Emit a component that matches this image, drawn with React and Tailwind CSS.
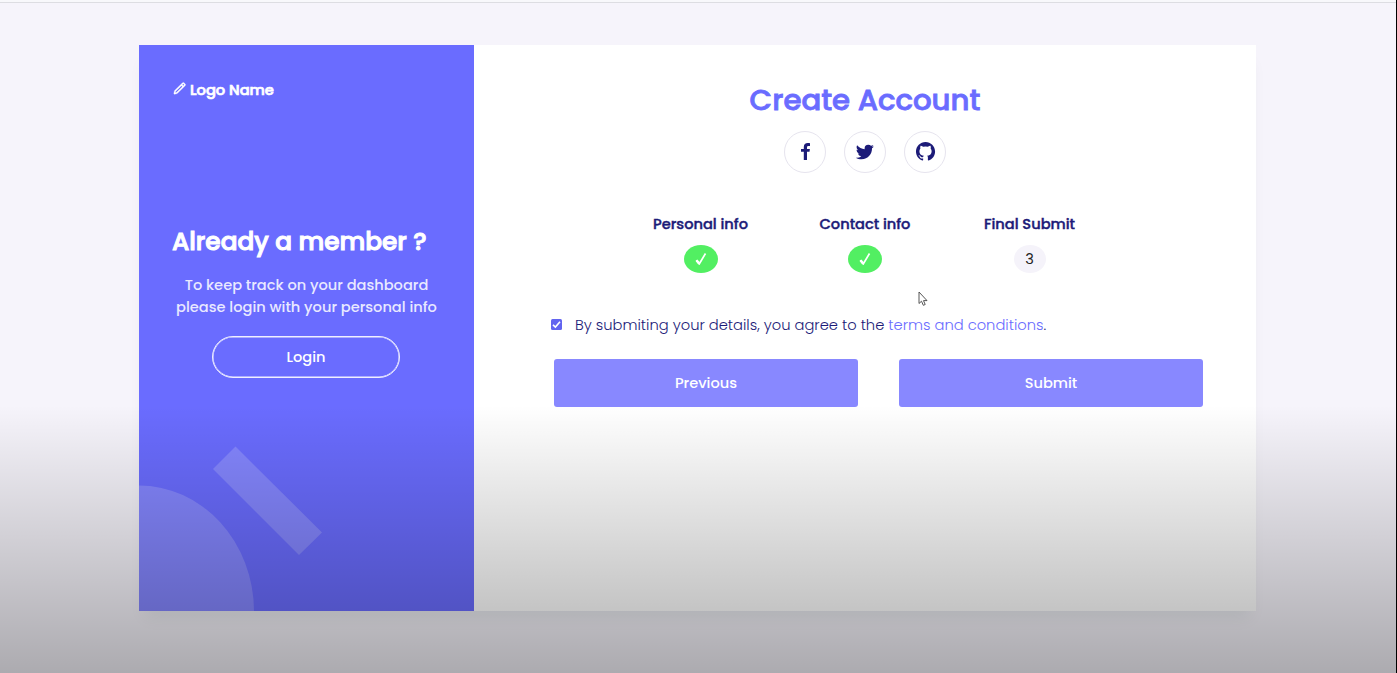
import { BiPencil, BiLogoTwitter, BiLogoGithub } from "react-icons/bi";

function FacebookIcon() {
  return (
    <svg className="mb-px" width="9" height="17" viewBox="0 0 9 17" fill="currentColor">
      <path d="M9 .2V3H7.500C6.300 3 6 3.500 6 4.500V6H8.900L8.500 8.800H6V17H2.800V8.800H0V6H2.800V4C2.800 1.400 4.300 0 6.800 0C7.800 0 8.600.1 9 .2Z" />
    </svg>
  );
}

const socials = [
  { name: "Facebook", icon: <FacebookIcon /> },
  { name: "Twitter", icon: <BiLogoTwitter className="size-[22px]" /> },
  { name: "GitHub", icon: <BiLogoGithub className="mb-px size-[23px]" /> },
];

const steps = [
  { label: "Personal info", done: true },
  { label: "Contact info", done: true },
  { label: "Final Submit", done: false },
];

function LoginPanel() {
  return (
    <aside className="relative flex w-[335px] shrink-0 flex-col overflow-hidden bg-[#6a6cff] text-white">
      <div className="mt-[33px] ml-[33px] flex h-6 items-center whitespace-nowrap">
        <BiPencil className="mb-1 size-[15px] [stroke-width:0.6px]" />
        <span className="ml-[3px] pb-px text-[14.7px] leading-[22px] font-medium [-webkit-text-stroke:0.7px_#fff]">
          Logo Name
        </span>
      </div>
      <h2 className="mt-[120px] ml-[33px] h-10 text-[24.8px] leading-10 font-medium whitespace-nowrap [-webkit-text-stroke:1px_#fff]">
        Already a member ?
      </h2>
      <p className="mt-3 text-center text-[14.6px] leading-[22px] font-medium whitespace-nowrap text-[#e9e9ff]">
        To keep track on your dashboard
        <br />
        please login with your personal info
      </p>
      <button className="mt-[18px] ml-[73px] h-[42px] w-[188px] rounded-full border-[1.5px] border-[#f0efff] pt-[2px] text-[14.6px] font-medium shadow-[inset_0_0_0_0.5px_#f0efff]">
        Login
      </button>
      <svg className="absolute bottom-0 left-0" width="200" height="176" viewBox="0 0 200 176">
        <path d="M0 50.500A115 126 0 0 1 115 176H0Z" fill="#fff" fillOpacity=".18" />
        <path d="M96.500 11.500L183 97.500L160 120L74 34Z" fill="#fff" fillOpacity=".18" />
      </svg>
    </aside>
  );
}

function Step({ label, done }) {
  return (
    <div className="flex w-[164.500px] flex-col items-center">
      <span className="h-6 text-[14.6px] leading-6 font-medium whitespace-nowrap [-webkit-text-stroke:0.4px_#1c1b78]">
        {label}
      </span>
      {done ? (
        <span className="mt-[9px] flex h-7 w-[34px] items-center justify-center rounded-[50%] bg-[#52ef62]">
          <svg width="12" height="14" viewBox="0 0 12 14" fill="none" stroke="#fff">
            <path d="M1.300 8.300L4.200 12L10.500 1.500" strokeWidth="1.700" strokeLinejoin="round" />
            <path d="M1.500 8.300L4.200 11.500" strokeWidth="2.500" />
          </svg>
        </span>
      ) : (
        <span className="mt-[9px] flex h-7 w-8 items-center justify-center rounded-[50%] bg-[#f5f3fa] pt-[2px] text-[14.6px] text-[#222]">
          3
        </span>
      )}
    </div>
  );
}

function AccountForm() {
  return (
    <main className="flex flex-1 flex-col items-center bg-white text-[#1c1b78]">
      <h1 className="mt-[35px] h-10 text-[29.2px] leading-10 font-medium whitespace-nowrap text-[#6a6cff] [-webkit-text-stroke:0.8px_#6a6cff]">
        Create Account
      </h1>
      <div className="mt-[11px] flex gap-[18px]">
        {socials.map(({ name, icon }) => (
          <a
            key={name}
            aria-label={name}
            className="flex size-[42px] items-center justify-center rounded-full border border-[#e6e4ee]"
          >
            {icon}
          </a>
        ))}
      </div>
      <div className="mt-[39px] flex">
        {steps.map((step) => (
          <Step key={step.label} {...step} />
        ))}
      </div>
      <div className="mt-10 ml-[77px] flex h-6 items-center self-start">
        <span className="mb-[2px] flex size-[11px] items-center justify-center rounded-[1.500px] bg-[#6264f0]">
          <svg width="9" height="9" viewBox="0 0 9 9" fill="none" stroke="#fff" strokeWidth="1.600">
            <path d="M1 4.800L3.400 7L8 1.800" />
          </svg>
        </span>
        <span className="ml-[13px] text-[14.7px] leading-6 font-light whitespace-nowrap">
          By submiting your details, you agree to the <a className="text-[#6a6cff]">terms and conditions</a>.
        </span>
      </div>
      <div className="mt-[22px] ml-[27px] flex gap-[41px] text-[14.6px] font-medium text-white">
        <button className="h-12 w-[304px] rounded-[3px] bg-[#8888ff] pt-[2px]">Previous</button>
        <button className="h-12 w-[304px] rounded-[3px] bg-[#8888ff] pt-[2px]">Submit</button>
      </div>
    </main>
  );
}

export default function App() {
  return (
    <div className="relative h-[673px] w-[1397px] overflow-hidden border-r border-black bg-[#f6f4fb] font-['Poppins','Inter',sans-serif]">
      <div className="h-[3px] border-b border-[#dddde2] bg-[#f8f8fb]" />
      <div className="mt-[42px] ml-[139px] flex h-[566px] w-[1117px] shadow-[0_12px_16px_-6px_rgba(0,70,40,0.07)]">
        <LoginPanel />
        <AccountForm />
      </div>
      <svg
        className="pointer-events-none absolute top-[291px] left-[918px]"
        width="10"
        height="16"
        viewBox="0 0 10 16"
        fill="#fff"
        stroke="#444"
        strokeWidth=".9"
      >
        <path d="M1 1V12.500L3.500 10.200L5.300 14.300L7.200 13.500L5.500 9.600H9Z" />
      </svg>
      <div className="pointer-events-none absolute inset-x-0 top-[405px] bottom-0 bg-linear-to-b from-black/0 to-black/30" />
    </div>
  );
}
